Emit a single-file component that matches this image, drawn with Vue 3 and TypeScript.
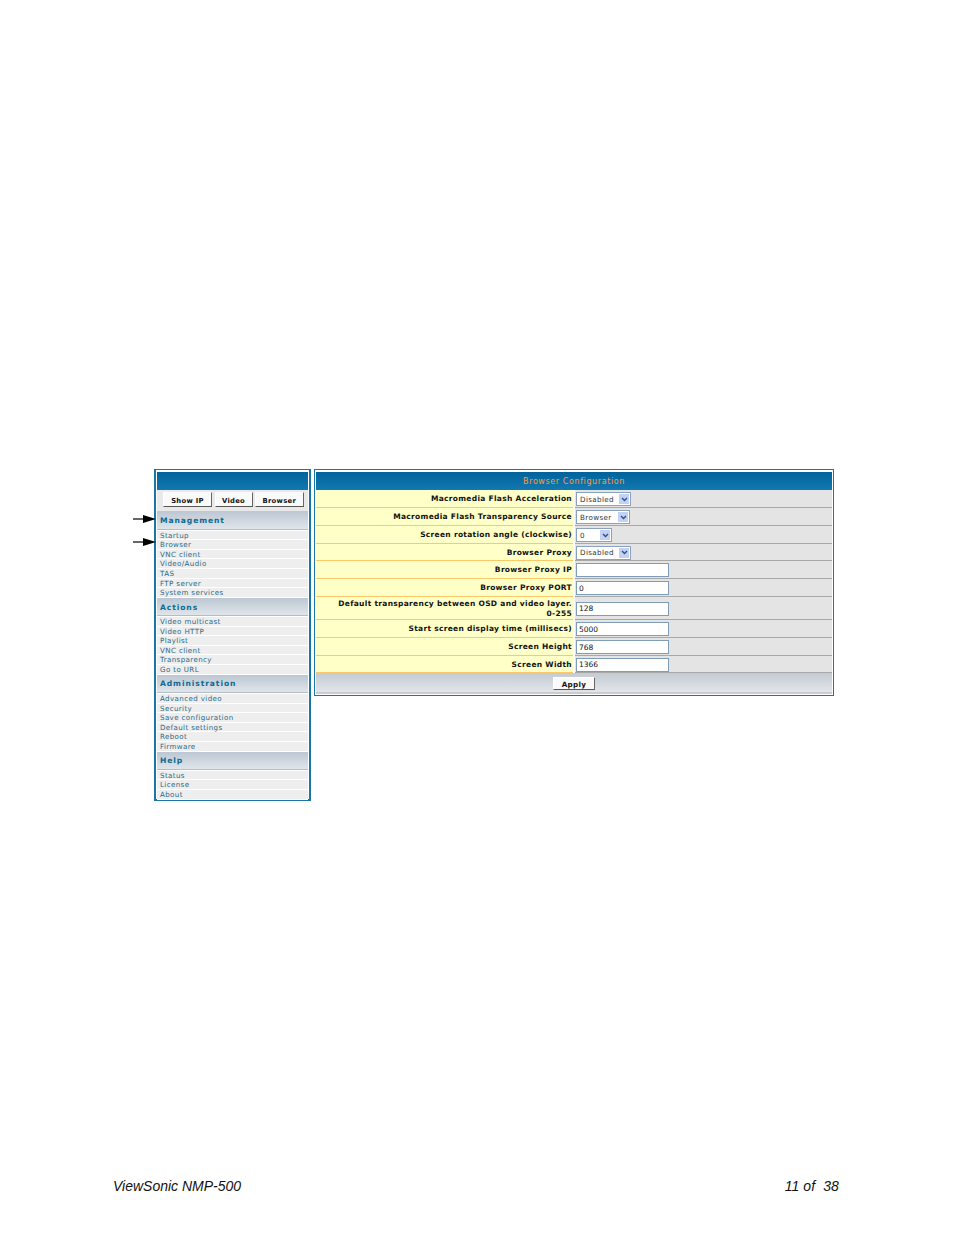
<script setup lang="ts">
const sections = [
  { title: 'Management', items: ['Startup', 'Browser', 'VNC client', 'Video/Audio', 'TAS', 'FTP server', 'System services'] },
  { title: 'Actions', items: ['Video multicast', 'Video HTTP', 'Playlist', 'VNC client', 'Transparency', 'Go to URL'] },
  { title: 'Administration', items: ['Advanced video', 'Security', 'Save configuration', 'Default settings', 'Reboot', 'Firmware'] },
  { title: 'Help', items: ['Status', 'License', 'About'] },
]
type Row = { label: string; kind: 'select' | 'input'; value: string; width?: number; size?: string }
const rows: Row[] = [
  { label: 'Macromedia Flash Acceleration', kind: 'select', value: 'Disabled', width: 55 },
  { label: 'Macromedia Flash Transparency Source', kind: 'select', value: 'Browser', width: 54 },
  { label: 'Screen rotation angle (clockwise)', kind: 'select', value: '0', width: 36 },
  { label: 'Browser Proxy', kind: 'select', value: 'Disabled', width: 55, size: 'short' },
  { label: 'Browser Proxy IP', kind: 'input', value: '' },
  { label: 'Browser Proxy PORT', kind: 'input', value: '0' },
  { label: 'Default transparency between OSD and video layer.\n0-255', kind: 'input', value: '128', size: 'tall' },
  { label: 'Start screen display time (millisecs)', kind: 'input', value: '5000' },
  { label: 'Screen Height', kind: 'input', value: '768' },
  { label: 'Screen Width', kind: 'input', value: '1366', size: 'short' },
]
</script>

<template>
  <div class="page">
    <div class="shot">
      <aside class="side">
        <div class="bar"></div>
        <div class="btns">
          <span class="btn b1">Show IP</span>
          <span class="btn b2">Video</span>
          <span class="btn b3">Browser</span>
        </div>
        <section v-for="s in sections" :key="s.title">
          <h3 class="sec">{{ s.title }}</h3>
          <div class="items">
            <div v-for="i in s.items" :key="i" class="item">{{ i }}</div>
          </div>
        </section>
      </aside>

      <main class="panel">
        <div class="bar title">Browser Configuration</div>
        <div v-for="r in rows" :key="r.label" class="row" :class="r.size">
          <div class="lab">{{ r.label }}</div>
          <div class="val">
            <div v-if="r.kind === 'select'" class="sel" :style="{ width: r.width + 'px' }">
              <span>{{ r.value }}</span>
              <span class="drop">
                <svg width="7" height="5" viewBox="0 0 7 5"><path d="M1 1l2.5 2.5L6 1" fill="none" stroke="#2f4f8f" stroke-width="1.4"/></svg>
              </span>
            </div>
            <div v-else class="inp">{{ r.value }}</div>
          </div>
        </div>
        <div class="foot"><span class="btn apply">Apply</span></div>
      </main>

      <svg class="arrow a1" width="23" height="8" viewBox="0 0 23 8"><path d="M0 4h12" stroke="#000" stroke-width="1.2"/><path d="M10 0l13 4-13 4z" fill="#000"/></svg>
      <svg class="arrow a2" width="23" height="8" viewBox="0 0 23 8"><path d="M0 4h12" stroke="#000" stroke-width="1.2"/><path d="M10 0l13 4-13 4z" fill="#000"/></svg>
    </div>

    <footer class="pagefoot">
      <span>ViewSonic NMP-500</span>
      <span class="num">11 of&nbsp; 38</span>
    </footer>
  </div>
</template>

<style scoped>
.page {
  width: 954px;
  height: 1235px;
  box-sizing: border-box;
  padding: 469px 0 0;
  display: flex;
  flex-direction: column;
  background: #fff;
  font-family: "DejaVu Sans", sans-serif;
  overflow: hidden;
}
.shot {
  position: relative;
  display: flex;
  align-items: flex-start;
  gap: 3px;
  margin-left: 154px;
}
.side {
  width: 157px;
  height: 332px;
  box-sizing: border-box;
  padding: 2px 1px 0 1px;
  border: 2px solid #1a76a6;
  border-top-width: 1px;
  background: #fff;
  display: flex;
  flex-direction: column;
}
.bar {
  height: 18px;
  flex: none;
  background: linear-gradient(#00639b, #1478b0);
}
.btns {
  height: 21.4px;
  flex: none;
  box-sizing: border-box;
  padding: 2px 4px 0 6px;
  display: flex;
  align-items: flex-start;
  gap: 2.5px;
  background: #e9e9ea;
}
.btn {
  box-sizing: border-box;
  display: flex;
  align-items: center;
  justify-content: center;
  height: 15px;
  padding-top: 3px;
  background: #fafafa;
  border: 1px solid #fff;
  border-right: 1px solid #666;
  border-bottom: 1px solid #555;
  color: #111;
  font-size: 6.8px;
  font-weight: 700;
  letter-spacing: 0.3px;
  white-space: nowrap;
}
.b1 { width: 49px; }
.b2 { width: 38px; }
.b3 { width: 48.5px; }
.sec {
  margin: 0;
  height: 18.6px;
  box-sizing: border-box;
  padding: 1px 0 0 3px;
  display: flex;
  align-items: center;
  background: linear-gradient(#bcc7d3, #e0e5ea);
  border-bottom: 1px solid #b4bcc4;
  color: #0b6a92;
  font-size: 7.6px;
  font-weight: 700;
  letter-spacing: 0.9px;
}
.items { padding-top: 0.7px; }
.item {
  height: 9.6px;
  box-sizing: border-box;
  padding-left: 3px;
  background: #eeeeee;
  border-bottom: 1px solid #fff;
  color: #2a6a88;
  font-size: 7.1px;
  line-height: 9px;
  letter-spacing: 0.38px;
  white-space: nowrap;
}
.panel {
  width: 520px;
  height: 227px;
  box-sizing: border-box;
  padding: 2px 1px 1px;
  border: 1px solid #1a76a6;
  background: #fff;
  display: flex;
  flex-direction: column;
}
.title {
  height: 18px;
  display: flex;
  align-items: center;
  justify-content: center;
  color: #ff9a33;
  font-size: 8px;
  letter-spacing: 0.6px;
}
.row {
  display: flex;
  gap: 2px;
  height: 18px;
  flex: none;
}
.row.short { height: 17px; }
.row.tall { height: 23px; }
.lab {
  width: 257px;
  flex: none;
  box-sizing: border-box;
  padding: 1px 1px 0 0;
  background: #ffffc8;
  border-bottom: 1px solid #fcc96a;
  display: flex;
  align-items: center;
  justify-content: flex-end;
  text-align: right;
  white-space: pre-line;
  color: #111;
  font-size: 7.5px;
  line-height: 9.5px;
  font-weight: 700;
  letter-spacing: 0.3px;
}
.val {
  flex: 1;
  box-sizing: border-box;
  padding: 1px 0 0 1px;
  background: #e4e4e4;
  border-bottom: 1px solid #a8a8a8;
  display: flex;
  align-items: center;
}
.sel {
  box-sizing: border-box;
  height: 14px;
  padding: 0 1px 0 3px;
  display: flex;
  align-items: center;
  justify-content: space-between;
  background: #fff;
  border: 1px solid #8aa2c0;
  color: #333;
  font-size: 7.2px;
  letter-spacing: 0.35px;
}
.drop {
  width: 10px;
  height: 10px;
  background: #c3d1f2;
  display: flex;
  align-items: center;
  justify-content: center;
}
.inp {
  box-sizing: border-box;
  width: 93px;
  height: 14px;
  padding: 0 2px;
  display: flex;
  align-items: center;
  background: #fff;
  border: 1px solid #7f9db9;
  color: #111;
  font-size: 7.5px;
}
.foot {
  height: 21px;
  flex: none;
  display: flex;
  justify-content: center;
  align-items: flex-start;
  padding-top: 4px;
  box-sizing: border-box;
  background: linear-gradient(#c3cad3, #e2e6ea);
  border-bottom: 2px solid #c9ccd0;
}
.apply { width: 42px; height: 13px; padding-top: 1px; font-size: 7.2px; }
.arrow { position: absolute; }
.a1 { left: -21px; top: 46px; }
.a2 { left: -21px; top: 69px; }
.pagefoot {
  margin-top: auto;
  padding: 0 115px 41px 113px;
  display: flex;
  justify-content: space-between;
  font-family: "Liberation Sans", Arial, sans-serif;
  font-style: italic;
  font-size: 14px;
  line-height: 16px;
  color: #111;
}
.num { letter-spacing: 0.1px; }
</style>
